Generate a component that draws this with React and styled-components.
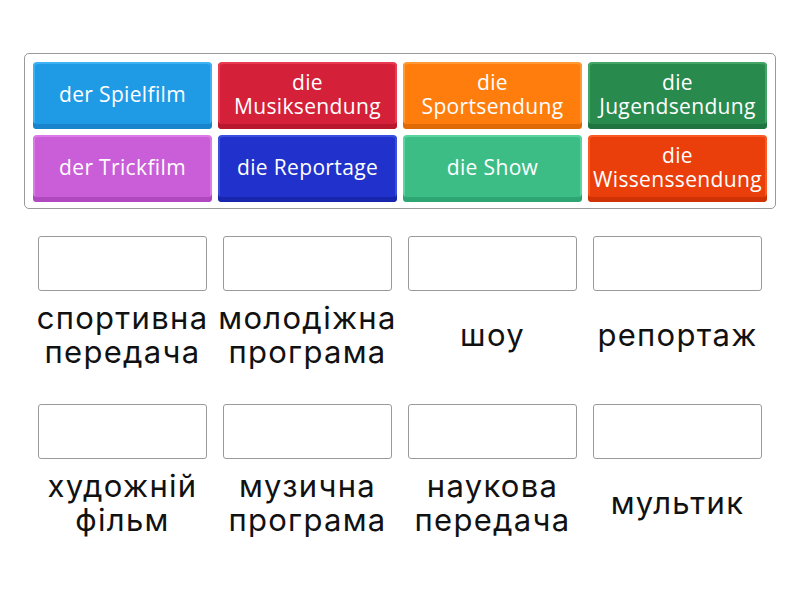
import React from "react";
import styled, { createGlobalStyle } from "styled-components";

const Global = createGlobalStyle`
  html, body { margin: 0; padding: 0; background: #ffffff; }
  body { font-family: "Open Sans", "Noto Sans", sans-serif; }
`;

const Page = styled.div`
  width: 800px;
  height: 600px;
  padding: 53px 24px 0;
  box-sizing: border-box;
`;

const Bank = styled.div`
  border: 1px solid #9a9a9a;
  border-radius: 5px;
  padding: 8px 8px 6px;
  display: grid;
  grid-template-columns: repeat(4, 179px);
  grid-auto-rows: 67px;
  gap: 6px;
  background: #fff;
`;

const Tile = styled.div`
  background: ${(p) => p.$bg};
  border-radius: 4px;
  border-top: 2px solid ${(p) => p.$light};
  box-shadow: inset 0 -5px 0 ${(p) => p.$dark}, inset 2px 0 0 ${(p) => p.$light}, inset -2px 0 0 ${(p) => p.$light};
  color: #ffffff;
  font-family: "Open Sans", "Noto Sans", sans-serif;
  font-size: 21px;
  line-height: 24px;
  letter-spacing: 0.35px;
  text-align: center;
  display: flex;
  align-items: center;
  justify-content: center;
  padding: 0 2px 6px;
  box-sizing: border-box;
  white-space: nowrap;
`;

const Targets = styled.div`
  margin: 27px 0 0 6px;
  display: grid;
  grid-template-columns: repeat(4, 185px);
  row-gap: 25px;
`;

const Cell = styled.div`
  display: flex;
  flex-direction: column;
  align-items: center;
`;

const Box = styled.div`
  width: 169px;
  height: 55px;
  box-sizing: border-box;
  border: 1px solid #9a9a9a;
  border-radius: 3px;
  background: #fff;
`;

const Label = styled.div`
  height: 88px;
  display: flex;
  align-items: center;
  justify-content: center;
  text-align: center;
  font-family: "Inter", "Roboto", sans-serif;
  font-size: 31px;
  line-height: 34px;
  letter-spacing: 1.3px;
  color: #111;
  white-space: nowrap;
`;

const tiles = [
  { t: ["der Spielfilm"], bg: "#1f9be6", light: "#3cb2f4", dark: "#1784cc" },
  { t: ["die", "Musiksendung"], bg: "#d5203a", light: "#ea3a52", dark: "#b8172d" },
  { t: ["die", "Sportsendung"], bg: "#ff7d0d", light: "#ff9a35", dark: "#e06a05" },
  { t: ["die", "Jugendsendung"], bg: "#298a4e", light: "#45a567", dark: "#1f7540" },
  { t: ["der Trickfilm"], bg: "#c95ed8", light: "#dc7ae8", dark: "#b048c0" },
  { t: ["die Reportage"], bg: "#2132cc", light: "#3a4fe0", dark: "#1826ad" },
  { t: ["die Show"], bg: "#3cbd86", light: "#5bd59f", dark: "#2ea673" },
  { t: ["die", "Wissenssendung"], bg: "#ea3e0b", light: "#fb5a25", dark: "#cf3305" },
];

const labels = [
  ["спортивна", "передача"],
  ["молодіжна", "програма"],
  ["шоу"],
  ["репортаж"],
  ["художній", "фільм"],
  ["музична", "програма"],
  ["наукова", "передача"],
  ["мультик"],
];

const Lines = ({ lines }) =>
  lines.map((l, i) => (
    <React.Fragment key={i}>
      {i > 0 && <br />}
      {l}
    </React.Fragment>
  ));

export default function App() {
  return (
    <Page>
      <Global />
      <Bank>
        {tiles.map((t, i) => (
          <Tile key={i} $bg={t.bg} $light={t.light} $dark={t.dark}>
            <span>
              <Lines lines={t.t} />
            </span>
          </Tile>
        ))}
      </Bank>
      <Targets>
        {labels.map((l, i) => (
          <Cell key={i}>
            <Box />
            <Label>
              <span>
                <Lines lines={l} />
              </span>
            </Label>
          </Cell>
        ))}
      </Targets>
    </Page>
  );
}
